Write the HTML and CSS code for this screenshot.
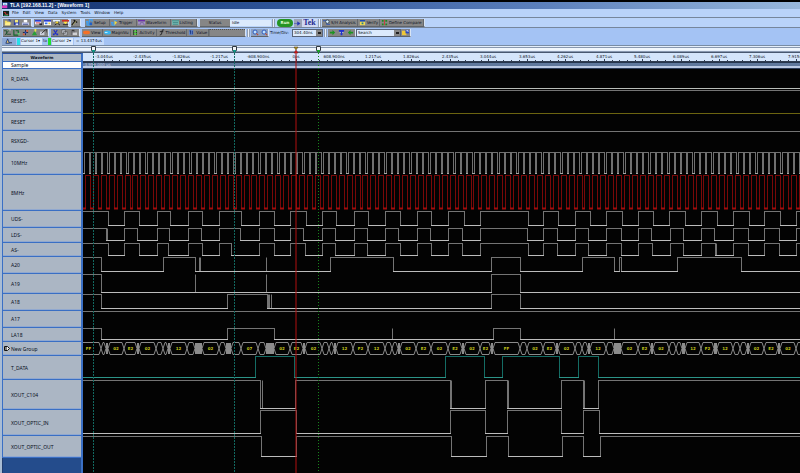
FILE: index.html
```
<!DOCTYPE html>
<html lang="en">
<head>
<meta charset="utf-8">
<title>TLA [192.168.11.2] - [Waveform 1]</title>
<link rel="stylesheet" href="styles.css">
</head>
<body>
<svg class="sprite" aria-hidden="true">
  <symbol id="i-open" viewBox="0 0 8 8"><path d="M1 2h2l1 1h3v4H1z" fill="#f4dc5c"/><path d="M2 4h6L7 7H1z" fill="#fff090"/><path d="M5 1h2v2" stroke="#163c9c" fill="none"/></symbol>
  <symbol id="i-save" viewBox="0 0 8 8"><path d="M1 1h6v6H1z" fill="#2438a8"/><path d="M2 1h4v3H2z" fill="#f4e878"/><path d="M3 5h3v2H3z" fill="#d8e0ff"/></symbol>
  <symbol id="i-print" viewBox="0 0 8 8"><path d="M2 1h4v3H2z" fill="#fff"/><path d="M0 4h8v3H0z" fill="#c4ccf0"/><path d="M1 6h6" stroke="#344480"/></symbol>
  <symbol id="i-win-red" viewBox="0 0 8 8"><path d="M0 1h7v5H0z" fill="#e8ecff"/><path d="M0 1h7v2H0z" fill="#2b3fd0"/><path d="M1 4h5v1H1z" fill="#e02c24"/><path d="M5 5h3v2H5z" fill="#223"/></symbol>
  <symbol id="i-win-blue" viewBox="0 0 8 8"><path d="M0 1h8v6H0z" fill="#fff"/><path d="M0 1h8v2H0z" fill="#2b3fd0"/><path d="M1 4h3v2H1z" fill="#3c78e8"/><path d="M5 4h2v2H5z" fill="#e8d040"/></symbol>
  <symbol id="i-win-star" viewBox="0 0 8 8"><path d="M0 1h8v2H0z" fill="#e4f0ff"/><path d="M3 3l5 4M7 3L2 7" stroke="#181818"/><path d="M3 3h3v2H3z" fill="#f0d030"/></symbol>
  <symbol id="i-win-down" viewBox="0 0 8 8"><path d="M0 1h8v2H0z" fill="#cc3028"/><path d="M2 3h4v1L4 6 2 4z" fill="#ffe040"/><path d="M1 6h6v1H1z" fill="#222"/></symbol>
  <symbol id="i-hammer" viewBox="0 0 8 8"><path d="M1 7l4-5M3 1l4 3" stroke="#111" stroke-width="1.4"/><path d="M2 7l4-5" stroke="#e8e070" stroke-width=".6"/></symbol>
  <symbol id="i-setup" viewBox="0 0 8 8"><path d="M0 7V3h2v4h2V1h3v2" fill="none" stroke="#3ca0f4" stroke-width="1.4"/><path d="M4 4h3v3H4z" fill="#2060c8"/></symbol>
  <symbol id="i-trigger" viewBox="0 0 8 8"><path d="M0 7V4h2v3h2V2h3" fill="none" stroke="#3ca0f4" stroke-width="1.3"/><path d="M4 2l3 2-3 3z" fill="#f4d838"/></symbol>
  <symbol id="i-wave" viewBox="0 0 8 8"><path d="M0 1h8v2H0z" fill="#6c30a8"/><path d="M0 3h8v4H0z" fill="#a498c4"/><path d="M0 6h3V4h3v2h2" fill="none" stroke="#705898" stroke-width=".7"/></symbol>
  <symbol id="i-list" viewBox="0 0 8 8"><path d="M0 1h8v6H0z" fill="#74b8b0"/><path d="M0 2h8M1 4h6M1 6h6" stroke="#367c80" stroke-width=".8"/></symbol>
  <symbol id="i-cut" viewBox="0 0 8 8"><path d="M2 1l3 5M6 1L3 6" stroke="#2030c8" stroke-width="1.2"/><path d="M1 5h2v2H1zM5 5h2v2H5z" fill="#2030c8"/></symbol>
  <symbol id="i-copy" viewBox="0 0 8 8"><path d="M1 1h4v4H1zM3 3h4v4H3z" fill="#c4c8d0" stroke="#444" stroke-width=".6"/></symbol>
  <symbol id="i-paste" viewBox="0 0 8 8"><path d="M1 2h5v5H1z" fill="#6c6c70"/><path d="M3 4h5v3H3z" fill="#d0d0d4"/><path d="M2 1h3v1H2z" fill="#222"/></symbol>
  <symbol id="i-probe" viewBox="0 0 8 8"><path d="M0 2h3v4h5M1 7l5-6" stroke="#1c5430" fill="none"/><path d="M5 1h3" stroke="#c8f0d0"/></symbol>
  <symbol id="i-addwave" viewBox="0 0 8 8"><path d="M1 1v6h5M3 2h3v3" stroke="#0c6828" fill="none" stroke-width="1.2"/><path d="M5 5h3v1H5z" fill="#58f070"/></symbol>
  <symbol id="i-nodes" viewBox="0 0 8 8"><path d="M1 4h6M4 1v6" stroke="#223"/><path d="M3 3h2v2H3z" fill="#2850d8"/><path d="M5 1h2v2H5zM1 5h2v2H1z" fill="#e05838"/></symbol>
  <symbol id="i-tree" viewBox="0 0 8 8"><path d="M1 7l3-5 3 5z" fill="#28a038"/><path d="M4 0h2v3H4z" fill="#e8e84c"/></symbol>
  <symbol id="i-edit" viewBox="0 0 8 8"><path d="M0 3h5v4H0z" fill="#ccd0dc"/><path d="M2 5l4-4h2v3" stroke="#222" fill="none"/></symbol>
  <symbol id="i-view" viewBox="0 0 8 8"><rect y="2" width="8" height="4" rx="2" fill="#f47028"/></symbol>
  <symbol id="i-magni" viewBox="0 0 8 8"><ellipse cx="4" cy="4" rx="4" ry="2.4" fill="#38b4f0"/><path d="M1 4h3" stroke="#d0f4ff"/></symbol>
  <symbol id="i-act" viewBox="0 0 8 8"><path d="M2 1v6M5 1v6" stroke="#083808"/><path d="M4 1l2 2H2zM4 7L2 5h4z" fill="#4cf038"/></symbol>
  <symbol id="i-thr" viewBox="0 0 8 8"><path d="M2 7l2-1 1-5h2M2 3h4" stroke="#202024" fill="none"/></symbol>
  <symbol id="i-val" viewBox="0 0 8 8"><path d="M1 1h5v6H1z" fill="#6488c8"/><path d="M2 2h1v4M5 2v4" stroke="#203c90"/></symbol>
  <symbol id="i-zoom" viewBox="0 0 8 8"><circle cx="3.5" cy="3.5" r="2.3" fill="#bce0ff" stroke="#2450b8"/><path d="M5 5l2 2" stroke="#c04830" stroke-width="1.3"/></symbol>
  <symbol id="i-prev" viewBox="0 0 8 8"><path d="M7 4L4 1v2H1v2h3v2z" fill="#1c9420"/></symbol>
  <symbol id="i-next" viewBox="0 0 8 8"><path d="M1 4l3-3v2h3v2H4v2z" fill="#1c9420"/></symbol>
  <symbol id="i-find" viewBox="0 0 8 8"><path d="M1 1h6v2H5v4H3V3H1z" fill="#2030d0"/><path d="M2 4h1M5 4h1" stroke="#e0e8ff"/></symbol>
  <symbol id="i-define" viewBox="0 0 8 8"><path d="M0 2h5v5H0z" fill="#f0c838"/><path d="M4 1h4v4H4z" fill="#2848c0"/><path d="M5 2h2v1" stroke="#fff" fill="none"/></symbol>
  <symbol id="i-sh" viewBox="0 0 8 8"><path d="M0 2h4v4h4" stroke="#2050c0" fill="none"/><circle cx="5" cy="3" r="2" fill="#d8f0ff" stroke="#345"/></symbol>
  <symbol id="i-verify" viewBox="0 0 8 8"><path d="M1 1h6v6H1z" fill="#f0d850"/><path d="M1 1h6v2H1z" fill="#1c4cb8"/><path d="M3 4h2v2H3z" fill="#1c8090"/></symbol>
  <symbol id="i-compare" viewBox="0 0 8 8"><path d="M1 1h2v2H1zM5 1h2v2H5zM1 5h2v2H1zM5 5h2v2H5z" fill="#208820"/><path d="M4 1v6" stroke="#d03838"/></symbol>
  <symbol id="i-arrow" viewBox="0 0 8 8"><path d="M0 4h4V2l3 2-3 2V4" fill="#2030b8" stroke="#2030b8" stroke-width=".5"/></symbol>
  <symbol id="i-delta" viewBox="0 0 8 8"><path d="M1 6l2-5 2 5z" fill="#e8c870" stroke="#1c3878"/><path d="M5 5h3v1H5z" fill="#223"/></symbol>
</svg>

<main class="app">
  <header class="titlebar">
    <svg class="icon" viewBox="0 0 8 8" aria-hidden="true"><path d="M1 1h5v3H1z" fill="#e8e8ff"/><path d="M0 4h6v3H0z" fill="#d838c0"/><path d="M2 2h3v1H2z" fill="#38b8e8"/></svg>
    <h1>TLA [192.168.11.2] - [Waveform 1]</h1>
  </header>

  <nav class="menubar">
    <svg class="icon" viewBox="0 0 8 8" aria-hidden="true"><path d="M0 1h7v6H0z" fill="#10241c"/><path d="M1 3h2v2h3" stroke="#e03838" fill="none"/><path d="M1 6h5" stroke="#28a868"/></svg>
    <a href="#">File</a><a href="#">Edit</a><a href="#">View</a><a href="#">Data</a><a href="#">System</a><a href="#">Tools</a><a href="#">Window</a><a href="#">Help</a>
  </nav>

  <div class="toolbar">
    <div class="group icons-a">
      <button aria-label="Open"><svg class="icon"><use href="#i-open"/></svg></button>
      <button aria-label="Save"><svg class="icon"><use href="#i-save"/></svg></button>
      <button aria-label="Print"><svg class="icon"><use href="#i-print"/></svg></button>
    </div>
    <div class="group icons-b">
      <button aria-label="System window"><svg class="icon"><use href="#i-win-red"/></svg></button>
      <button aria-label="Data window"><svg class="icon"><use href="#i-win-blue"/></svg></button>
      <button aria-label="New window"><svg class="icon"><use href="#i-win-star"/></svg></button>
      <button aria-label="Load window"><svg class="icon"><use href="#i-win-down"/></svg></button>
    </div>
    <div class="group icons-c">
      <button aria-label="Properties"><svg class="icon"><use href="#i-hammer"/></svg></button>
    </div>
    <div class="group windows">
      <button><svg class="icon"><use href="#i-setup"/></svg>Setup</button>
      <button><svg class="icon"><use href="#i-trigger"/></svg>Trigger</button>
      <button><svg class="icon"><use href="#i-wave"/></svg>Waveform</button>
      <button><svg class="icon"><use href="#i-list"/></svg>Listing</button>
    </div>
    <button class="status">Status</button>
    <output class="idle">Idle</output>
    <i class="grip"></i>
    <button class="run">Run</button>
    <button class="step" aria-label="Repeat"><svg class="icon"><use href="#i-arrow"/></svg></button>
    <strong class="brand">Tek</strong>
    <i class="grip"></i>
    <div class="group analysis">
      <button><svg class="icon"><use href="#i-sh"/></svg>S/H Analysis</button>
      <button><svg class="icon"><use href="#i-verify"/></svg>Verify</button>
      <button><svg class="icon"><use href="#i-compare"/></svg>Define Compare</button>
    </div>
  </div>

  <div class="toolbar second">
    <div class="group edit">
      <button aria-label="Probe"><svg class="icon"><use href="#i-probe"/></svg></button>
      <button aria-label="Add waveform"><svg class="icon"><use href="#i-addwave"/></svg></button>
      <button aria-label="Nodes"><svg class="icon"><use href="#i-nodes"/></svg></button>
      <button aria-label="Mark"><svg class="icon"><use href="#i-tree"/></svg></button>
      <button aria-label="Edit"><svg class="icon"><use href="#i-edit"/></svg></button>
    </div>
    <div class="group clip">
      <button aria-label="Cut"><svg class="icon"><use href="#i-cut"/></svg></button>
      <button aria-label="Copy"><svg class="icon"><use href="#i-copy"/></svg></button>
      <button aria-label="Paste"><svg class="icon"><use href="#i-paste"/></svg></button>
    </div>
    <div class="group display">
      <button><svg class="icon"><use href="#i-view"/></svg>View</button>
      <button><svg class="icon"><use href="#i-magni"/></svg>MagniVu</button>
      <button><svg class="icon"><use href="#i-act"/></svg>Activity</button>
      <button><svg class="icon"><use href="#i-thr"/></svg>Threshold</button>
      <button><svg class="icon"><use href="#i-val"/></svg>Value</button>
      <span class="blank"></span>
    </div>
    <i class="grip"></i>
    <div class="group zoom">
      <button aria-label="Zoom in"><svg class="icon"><use href="#i-zoom"/></svg></button>
      <button aria-label="Zoom out"><svg class="icon"><use href="#i-zoom"/></svg></button>
    </div>
    <label for="timediv">Time/Div:</label>
    <div class="combo timediv"><select id="timediv"><option>304.40ns</option></select></div>
    <i class="grip"></i>
    <div class="group search-icons">
      <button aria-label="Search back"><svg class="icon"><use href="#i-prev"/></svg></button>
      <button aria-label="Find"><svg class="icon"><use href="#i-find"/></svg></button>
      <button aria-label="Search forward"><svg class="icon"><use href="#i-next"/></svg></button>
    </div>
    <div class="combo search"><select aria-label="Search"><option>Search</option></select></div>
    <div class="group last"><button aria-label="Define search"><svg class="icon"><use href="#i-define"/></svg></button></div>
  </div>

  <div class="cursorbar">
    <button class="delta" aria-label="Delta"><svg class="icon"><use href="#i-delta"/></svg></button>
    <i class="swatch c1"></i>
    <select aria-label="From cursor"><option>Cursor 1▾</option></select>
    <span>to</span>
    <i class="swatch c2"></i>
    <select aria-label="To cursor"><option>Cursor 2▾</option></select>
    <output>= 13.4374us</output>
  </div>

  <section class="scope">
    <div class="overview"></div>
    <div class="row head">
      <div class="name">Waveform</div>
      <svg class="ruler" id="ruler"></svg>
    </div>
    <div class="row sample">
      <div class="name">Sample</div>
      <div class="samples">-3.959,000 us</div>
    </div>
    <div class="signals" id="signals"></div>
    <div class="row rest"><div class="empty"></div><div class="void"></div></div>
    <svg class="cursors" aria-hidden="true">
      <g class="teal"><line x1="93.5" y1="8" x2="93.5" y2="100%"/><line x1="234.5" y1="8" x2="234.5" y2="100%"/></g>
      <line class="red" x1="296" y1="8" x2="296" y2="100%"/>
      <line class="green" x1="318.5" y1="8" x2="318.5" y2="100%"/>
      <g class="marker">
        <path d="M91.5 1.5h4v4l-2 2-2-2z"/><path d="M232.5 1.5h4v4l-2 2-2-2z"/><path d="M316.5 1.5h4v4l-2 2-2-2z"/>
      </g>
      <path d="M92 5h3v1l-1.500 2L92 6zM233 5h3v1l-1.500 2L233 6z" fill="#109888"/>
      <path d="M317 5h3v1l-1.500 2L317 6z" fill="#18a828"/>
      <path d="M294 2h4l-2 3z" fill="#a89420" stroke="#503010" stroke-width=".5"/>
      <path d="M294 8h4l-2-3z" fill="#e01818" stroke="#701010" stroke-width=".5"/>
    </svg>
  </section>
</main>
<script src="waves.js"></script>
</body>
</html>
```
FILE: styles.css
```
* { box-sizing: border-box; }

body {
  margin: 0;
  background: #000;
  font: 4px/6px "DejaVu Sans", sans-serif;
  color: #0c1224;
}

button, select, output, a {
  font: inherit;
  color: inherit;
  text-decoration: none;
  white-space: nowrap;
}

button, select {
  appearance: none;
  border: 0;
  border-radius: 0;
  margin: 0;
  padding: 0;
  background: none;
}

.sprite { display: none; }
.icon { width: 7px; height: 7px; flex: none; display: block; }

.app {
  min-height: 100vh;
  display: flex;
  flex-direction: column;
  padding-top: 2px;
  border-left: 2px solid #a9bcd4;
  background: #000;
}

.titlebar {
  display: flex;
  align-items: center;
  gap: 1px;
  height: 7px;
  background: linear-gradient(90deg, #12306c, #2e5498 35%, #5c80bc 68%, #98b8dc);
}
.titlebar h1 {
  margin: 0;
  font: bold 5px/7px "Liberation Sans", sans-serif;
  color: #fff;
}

.menubar {
  display: flex;
  align-items: center;
  gap: 4px;
  height: 8px;
  background: #b9d3fa;
}
.menubar .icon { margin-left: 1px; margin-right: -2px; }

.toolbar {
  display: flex;
  align-items: stretch;
  height: 10px;
  padding: 1px 0 0 1px;
  border-top: 1px solid #76869c;
  background: #b9d3fa;
}
.toolbar.second { background: #a4c3f4; }
.toolbar > label { align-self: center; width: 22px; white-space: nowrap; }

.group {
  display: flex;
  background: #868686;
  border-bottom: 1px solid #606468;
  border-right: 1px solid #d8e4f4;
}
.group button {
  display: flex;
  align-items: center;
  gap: 1px;
  padding: 0 1px;
}
.icons-a { width: 29px; margin-right: 2px; }
.icons-b { width: 35px; margin-right: 2px; }
.icons-c { width: 10px; margin-right: 4px; }
.icons-c button { padding: 0; }
.windows { width: 113px; margin-right: 2px; }
.windows button, .display button, .analysis button {
  flex: auto;
  border-right: 1px solid #64686c;
}
.status {
  width: 30px;
  background: #868686;
  border-bottom: 1px solid #606468;
}
.idle {
  width: 41px;
  padding: 0 2px;
  align-self: center;
  background: #dceafc;
}
.grip {
  width: 3px;
  margin: 0 1px;
  border: 1px solid #94a0b0;
  border-width: 0 1px;
  background: #e8f0fc;
}
.run {
  width: 16px;
  margin: 0 1px;
  border-radius: 4px;
  background: #259424;
  color: #e4ffd8;
  font-weight: bold;
  text-align: center;
}
.step { width: 8px; background: #9ca4b8; }
.brand {
  width: 15px;
  font: bold 8px/8px "Liberation Serif", serif;
  color: #1c2890;
  background: #d0d8f0;
  text-align: center;
}
.analysis { min-width: 99px; }

.edit { width: 46px; margin-right: 2px; }
.clip { width: 29px; margin-right: 2px; }
.display { width: 164px; }
.display .blank {
  width: 36px;
  border-top: 1px dotted #505050;
  border-left: 1px solid #707478;
}
.zoom { width: 18px; margin-right: 1px; background: #8ca0c0; }
.combo {
  display: flex;
  position: relative;
  border: 1px solid #586478;
  background: #dceafc;
}
.combo select { width: 100%; padding: 0 1px; }
.combo::after {
  content: "";
  position: absolute;
  right: 0;
  top: 0;
  bottom: 0;
  width: 6px;
  background: linear-gradient(#222, #222) center / 3px 2px no-repeat #868686;
  pointer-events: none;
}
.timediv { width: 31px; }
.search-icons { width: 28px; }
.search { width: 45px; }
.last { width: 10px; }

.cursorbar {
  display: flex;
  align-items: center;
  height: 8px;
  gap: 1px;
  background: #a4c3f4;
}
.cursorbar select { width: 21px; height: 7px; background: #dceafc; }
.cursorbar output { height: 7px; padding: 0 2px; background: #c4dafa; }
.delta { width: 14px; height: 7px; padding-left: 3px; background: #8ca8d4; }
.swatch { width: 3px; height: 7px; }
.c1 { background: #28e0e8; }
.c2 { background: #20e030; }

.scope {
  position: relative;
  flex: 1;
  display: flex;
  flex-direction: column;
  background: #030303;
}
.overview {
  height: 8px;
  border-top: 1px solid #788ca4;
  background: repeating-linear-gradient(#e4eefa 0 1px, #8898b0 1px 2px, #f0f6fc 2px 4px);
  border-bottom: 1px solid #485870;
}
.row {
  display: grid;
  grid-template-columns: 81px minmax(0, 1fr);
}
.name {
  display: flex;
  align-items: center;
  gap: 1px;
  padding-left: 8px;
  border: 1px solid #3a6fc4;
  border-width: 0 2px 1px 1px;
  background: #abb6c4;
  font: 5px/6px "Noto Sans", sans-serif;
  color: #080e1c;
}
.head { height: 9px; }
.head .name {
  justify-content: center;
  padding: 0;
  border-top: 1px solid #2c50a0;
  font: bold 4px/6px "DejaVu Sans", sans-serif;
}
.ruler { width: 100%; height: 9px; display: block; background: #d4e5fb; }
.ruler text { font-size: 4px; text-anchor: middle; fill: #101828; }
.ruler path { stroke: #303c50; fill: none; }
.sample { height: 7px; }
.sample .name { background: #fff; }
.samples {
  background: linear-gradient(#24344c 0 1px, #60789c 1px 4px, #bccae4 4px 6px, #2c3c58 6px);
  color: #c0cce0;
  line-height: 5px;
}
.signal .name { box-shadow: inset 0 -1px #90a8d0; }
.group-icon { width: 6px; height: 5px; margin-left: -7px; }
.wave { width: 100%; height: 100%; display: block; }
.wave path { fill: none; stroke-width: 1; }
.wave text { font: bold 4px "DejaVu Sans", sans-serif; fill: #c4c41c; text-anchor: middle; }
.rest { flex: 1; }
.empty { background: #244c8c; border-right: 2px solid #3a6fc4; border-left: 1px solid #203c70; }

.cursors {
  position: absolute;
  inset: 0 0 0 -2px;
  width: calc(100% + 2px);
  height: 100%;
  pointer-events: none;
}
.teal { stroke: #126860; stroke-dasharray: 2 1; }
.red { stroke: #b01010; stroke-width: 2; opacity: .5; }
.green { stroke: #18841c; stroke-dasharray: 1 2; }
.marker { fill: #f0f4f8; stroke: #303840; }
```
FILE: waves.js
```
const LEFT = 83;
const END = 4000;
const GREY = ["#747474", "#bcbcbc"];

function clock(rise, period, high) {
  const edges = [];
  let x = rise - Math.ceil((rise - LEFT) / period) * period;
  for (; x < 1600; x += period) edges.push(Math.round(x), Math.round(x + high));
  return edges;
}

// Each signal: name, row height, low level, starting level, edge positions.
const signals = [
  { name: "R_DATA", h: 21, low: 19.5, start: 0, edges: [], color: ["#aaa", "#b8bcb8"] },
  { name: "RESET-", h: 23, low: 21.5, start: 1, edges: [] },
  { name: "RESET", h: 18, low: 16.5, start: 1, edges: [], color: ["#6c6410", "#6c6410"] },
  { name: "RSXGD-", h: 21, low: 19.5, start: 1, edges: [] },
  { name: "10MHz", h: 23, low: 21.5, start: 0, edges: clock(272.3, 6.29, 5), color: ["#707070", "#a8a8a8"] },
  { name: "8MHz", h: 36, low: 33.5, start: 0, edges: clock(267.3, 7.93, 5), color: ["#780808", "#a00c0c"], thick: true },
  { name: "UDS-", h: 17, low: 14.5, start: 1, edges: [108,124,139,157,170,188,202,219,241,259,274,290,306,322,336,354,368,385,400,417,431,448,464,480,528,543,558,575,590,606,622,638,653,669,685,701,717,733,749,764,780,796] },
  { name: "LDS-", h: 15, low: 12.5, start: 1, bars: [107], edges: [106,124,137,157,169,188,201,219,240,259,274,290,303,322,335,354,367,385,398,417,430,448,462,480,527,543,557,575,588,606,621,638,651,670,683,701,714,733,748,764,779,796] },
  { name: "AS-", h: 14, low: 12.5, start: 1, bars: [716], edges: [108,124,139,157,168,188,202,219,231,259,274,290,305,322,335,354,367,385,400,417,431,448,462,480,528,543,557,575,588,606,621,638,652,670,683,701,715,733,748,764,779,796] },
  { name: "A20", h: 17, low: 14.5, start: 1, bars: [199, 200, 266], edges: [101,163,195,330,393,491,520,582,614,619,621,677,741] },
  { name: "A19", h: 20, low: 18.5, start: 1, bars: [195, 266], edges: [101,491,520] },
  { name: "A18", h: 17, low: 14.5, start: 1, bars: [268, 269, 271], edges: [101,227,267,491,520] },
  { name: "A17", h: 17, low: 14.5, start: 1, edges: [] },
  { name: "LA18", h: 14, low: 11.5, start: 1, bars: [392, 614], edges: [101,227,274,493,520] },
  { name: "New Group", h: 14, bus: true },
  { name: "T_DATA", h: 24, low: 21.5, start: 0, edges: [255,294,445,484,502,559,578,598], color: ["#146c64", "#2c9488"] },
  { name: "XOUT_C104", h: 30, low: 28.5, start: 1, bars: [262, 451, 508, 584], edges: [260,295,450,485,507,561,583,598] },
  { name: "XOUT_OPTIC_IN", h: 26, low: 23.5, start: 0, edges: [260,296,450,485,507,561,583,599] },
  { name: "XOUT_OPTIC_OUT", h: 22, low: 20.5, start: 1, edges: [261,296,451,486,508,562,583,600] }
];

// Bus cells: start, end, value. "" is a cell too short for text, "#" a burst of changes.
const bus = [
  [76,101,"FF"],[101,106,""],[106,108,"#"],[108,124,"02"],[124,137,"E2"],[137,139,"#"],[139,156,"02"],[156,163,""],[163,168,""],[168,170,"#"],
  [170,187,"12"],[187,195,""],[195,202,"#"],[202,219,"02"],[219,226,""],[226,231,"#"],[231,241,""],[241,258,"07"],[258,266,""],[266,274,"#"],
  [274,290,"02"],[290,303,"E2"],[303,305,"#"],[305,322,"02"],[322,329,""],[329,334,""],[334,336,"#"],[336,353,"12"],[353,368,"F2"],[368,385,"12"],
  [385,392,""],[392,398,""],[398,400,"#"],[400,416,"02"],[416,431,"E2"],[431,448,"02"],[448,462,"E2"],[462,464,"#"],[464,480,"02"],[480,491,"E2"],
  [491,493,"#"],[493,520,"FF"],[520,527,""],[527,543,"02"],[543,556,"E2"],[556,558,"#"],[558,575,"02"],[575,582,""],[582,588,""],[588,590,"#"],
  [590,606,"12"],[606,614,""],[614,621,"#"],[621,638,"02"],[638,651,"E2"],[651,653,"#"],[653,669,"02"],[669,676,""],[676,682,""],[682,685,"#"],
  [685,701,"12"],[701,714,"F2"],[714,717,"#"],[717,733,"12"],[733,740,""],[740,747,""],[747,749,"#"],[749,764,"02"],[764,778,"E2"],[778,780,"#"],
  [780,796,"02"],[796,803,""]
];

function busSvg() {
  let cells = "", fills = "", text = "";
  for (const [a, b, v] of bus) {
    const s = a - LEFT, e = b - LEFT;
    if (v === "#") { fills += `<rect x="${s}" y="1" width="${e - s}" height="11" fill="#8c8c8c"/>`; continue; }
    cells += `M${s} 6.500L${s + 2} .5H${e - 2}L${e} 6.500L${e - 2} 12.500H${s + 2}Z`;
    if (v) text += `<text x="${(s + e) / 2}" y="8">${v}</text>`;
  }
  return `<path d="${cells}" stroke="#8a8a8a"/>${fills}${text}`;
}

function waveSvg(s) {
  const [hi, lo] = s.color || GREY;
  let level = s.start, x = 0, top = "", bottom = "", sides = "";
  for (const edge of [...s.edges, END]) {
    const nx = edge - LEFT;
    if (level) top += `M${x} .5H${nx + 1}`;
    else bottom += `M${x} ${s.low}H${nx + 1}`;
    if (edge !== END) sides += `M${nx + 0.5} .5V${s.low}`;
    x = nx;
    level = 1 - level;
  }
  for (const b of s.bars || []) sides += `M${b - LEFT + 0.5} .5V${s.low}`;
  const style = s.thick ? ' style="stroke-width:2"' : "";
  return `<path d="${top}${sides}" stroke="${hi}"/><path d="${bottom}" stroke="${lo}"${style}/>`;
}

const groupIcon = '<svg class="group-icon" viewBox="0 0 6 5"><path d="M.5.5h3l2 2-2 2h-3z" fill="#eee" stroke="#111"/><path d="M2 1v3" stroke="#111"/></svg>';
document.getElementById("signals").innerHTML = signals.map(s =>
  `<div class="row signal" style="height:${s.h}px"><div class="name">${s.bus ? groupIcon : ""}${s.name}</div>` +
  `<svg class="wave">${s.bus ? busSvg() : waveSvg(s)}</svg></div>`).join("");

const times = ["-3.044us","-2.435us","-1.826us","-1.217us","-608.900ns","0ps","608.900ns","1.217us","1.826us","2.435us","3.044us","3.653us","4.262us","4.871us","5.480us","6.089us","6.697us","7.306us","7.915us"];
let ticks = "M0 8.500H4000", labels = "";
times.forEach((t, i) => {
  const x = Math.round(296 + (i - 5) * 38.45) - LEFT;
  ticks += `M${x + 0.5} 6V9`;
  for (let k = 1; k < 5; k++) ticks += `M${x + Math.round(k * 7.7) + 0.5} 7V9`;
  labels += `<text x="${x}" y="5">${t}</text>`;
});
document.getElementById("ruler").innerHTML = `<path d="${ticks}"/>${labels}`;
```
